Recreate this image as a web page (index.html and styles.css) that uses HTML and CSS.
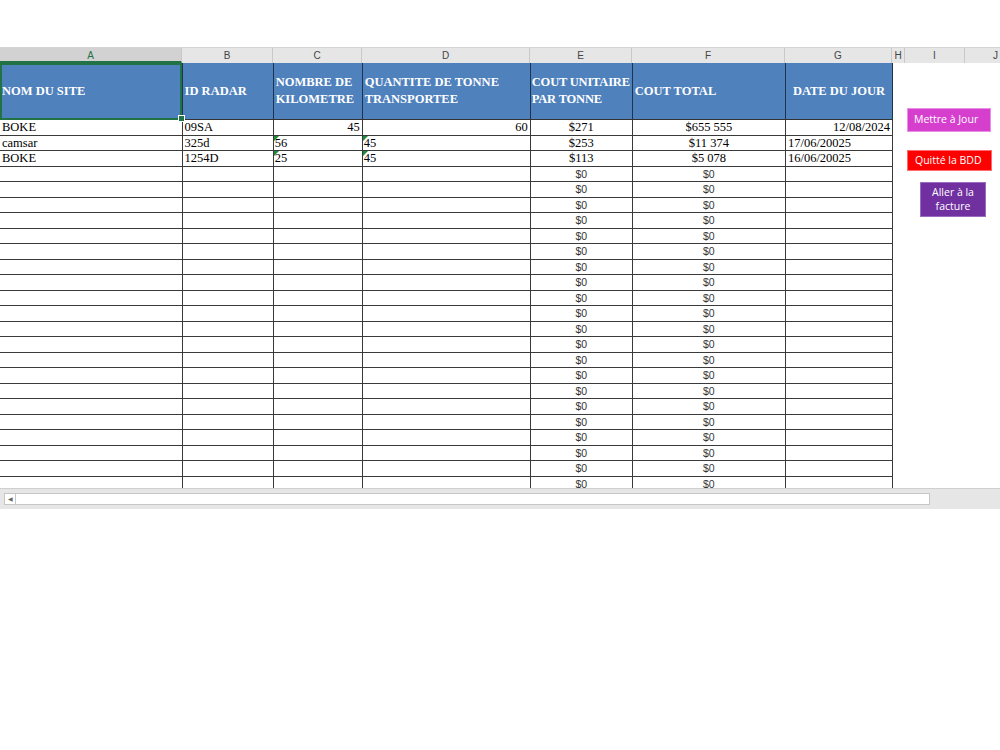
FILE: index.html
```html
<!DOCTYPE html>
<html lang="fr">
<head>
    <meta charset="UTF-8">
    <title>Base de données radar</title>
    <link rel="stylesheet" href="styles.css">
</head>
<body>
    <div class="sheet">
        <div class="col-heads">
            <div class="ch sel" style="width:182px">A</div>
            <div class="ch" style="width:91px">B</div>
            <div class="ch" style="width:89px">C</div>
            <div class="ch" style="width:168px">D</div>
            <div class="ch" style="width:102px">E</div>
            <div class="ch" style="width:153px">F</div>
            <div class="ch" style="width:107px">G</div>
            <div class="ch" style="width:13px">H</div>
            <div class="ch" style="width:60px">I</div>
            <div class="ch last">J</div>
        </div>

        <div class="grid">
            <table class="data">
                <colgroup>
                    <col style="width:182px"><col style="width:91px"><col style="width:89px">
                    <col style="width:168px"><col style="width:102px"><col style="width:153px">
                    <col style="width:107px">
                </colgroup>
                <thead>
                    <tr>
                        <th class="selected">NOM DU SITE<span class="handle"></span></th>
                        <th>ID RADAR</th>
                        <th>NOMBRE DE<br>KILOMETRE</th>
                        <th>QUANTITE DE TONNE<br>TRANSPORTEE</th>
                        <th class="tight">COUT UNITAIRE<br>PAR TONNE</th>
                        <th>COUT TOTAL</th>
                        <th class="center">DATE DU JOUR</th>
                    </tr>
                </thead>
                <tbody id="rows">
                    <tr>
                        <td>BOKE</td><td>09SA</td><td class="num">45</td><td class="num">60</td>
                        <td class="mid">$271</td><td class="mid">$655 555</td><td class="num">12/08/2024</td>
                    </tr>
                    <tr>
                        <td>camsar</td><td>325d</td><td class="txtnum">56</td><td class="txtnum">45</td>
                        <td class="mid">$253</td><td class="mid">$11 374</td><td>17/06/20025</td>
                    </tr>
                    <tr>
                        <td>BOKE</td><td>1254D</td><td class="txtnum">25</td><td class="txtnum">45</td>
                        <td class="mid">$113</td><td class="mid">$5 078</td><td>16/06/20025</td>
                    </tr>
                </tbody>
            </table>

            <div class="shape btn-maj">Mettre à Jour</div>
            <div class="shape btn-quit">Quitté la BDD</div>
            <div class="shape btn-fact">Aller à la<br>facture</div>
        </div>

        <div class="hscroll">
            <div class="arrow">&#9664;</div>
            <div class="track"></div>
        </div>
    </div>

    <script>
        // lignes vides avec les formules à $0
        var body = document.getElementById('rows');
        for (var i = 0; i < 21; i++) {
            var tr = document.createElement('tr');
            tr.innerHTML = '<td></td><td></td><td></td><td></td>' +
                '<td class="zero">$0</td><td class="zero">$0</td><td></td>';
            body.appendChild(tr);
        }
    </script>
</body>
</html>
```

FILE: styles.css
```css
body {
    margin: 0;
    background: #fff;
    font-family: 'Liberation Serif', serif;
    color: #000;
}
.sheet {
    margin-top: 47px;
    width: 1000px;
}
.col-heads {
    display: flex;
    height: 15px;
    background: #e6e6e6;
    border-top: 1px solid #d4d4d4;
    font-family: 'Liberation Sans', sans-serif;
    font-size: 10px;
    color: #444;
}
.ch {
    flex: none;
    box-sizing: border-box;
    border-right: 1px solid #c9c9c9;
    text-align: center;
    line-height: 15px;
}
.ch.sel {
    background: #d2d2d2;
    color: #217346;
    border-bottom: 2px solid #217346;
}
.ch.last {
    flex: 1;
    text-align: right;
    padding-right: 2px;
    border-right: none;
}
.grid {
    position: relative;
    height: 425px;
    overflow: hidden;
}
.data {
    table-layout: fixed;
    border-collapse: collapse;
    width: 893px;
}
.data th {
    height: 56px;
    padding: 0 2px;
    background: #4f81bd;
    color: #fff;
    font-size: 12.5px;
    line-height: 17px;
    font-weight: bold;
    text-align: left;
    white-space: nowrap;
    border-left: 1px solid #1f3350;
    border-right: 1px solid #1f3350;
    border-bottom: 1px solid #333;
    position: relative;
}
.data th.tight {
    padding: 0 1px;
    letter-spacing: -0.2px;
}
.data th.center {
    text-align: center;
}
.data th.selected {
    outline: 2px solid #217346;
    outline-offset: -2px;
    border-left: none;
}
.handle {
    position: absolute;
    right: -3px;
    bottom: -3px;
    width: 5px;
    height: 5px;
    background: #217346;
    border: 1px solid #fff;
    z-index: 2;
}
.data td {
    height: 14.5px;
    padding: 0 2px;
    font-size: 12.5px;
    line-height: 14px;
    border: 1px solid #3a3a3a;
    white-space: nowrap;
    overflow: hidden;
}
.data td:first-child {
    border-left: none;
}
.data td.num {
    text-align: right;
}
.data td.mid {
    text-align: center;
}
.data td.zero {
    text-align: center;
    font-family: 'Liberation Sans', sans-serif;
    font-size: 10.5px;
    color: #333;
}
.data td.txtnum {
    position: relative;
    padding-left: 1px;
}
.data td.txtnum::before {
    content: '';
    position: absolute;
    left: 0;
    top: 0;
    border-top: 5px solid #1e8a3c;
    border-right: 5px solid transparent;
}
.shape {
    position: absolute;
    box-sizing: border-box;
    font-family: 'Open Sans', 'Liberation Sans', sans-serif;
    font-size: 10.5px;
    color: #fff;
}
.btn-maj {
    left: 907px;
    top: 45px;
    width: 84px;
    height: 24px;
    padding: 3px 0 0 6px;
    background: #d63fce;
    border: 1px solid #e98fe4;
}
.btn-quit {
    left: 907px;
    top: 87px;
    width: 85px;
    height: 21px;
    padding: 2px 0 0 7px;
    background: #ff0000;
    border: 1px solid #ff6b6b;
}
.btn-fact {
    left: 920px;
    top: 119px;
    width: 66px;
    height: 35px;
    padding-top: 2px;
    text-align: center;
    line-height: 14px;
    background: #7030a0;
    border: 1px solid #9a6cc0;
}
.hscroll {
    display: flex;
    align-items: center;
    height: 20px;
    background: #e6e6e6;
    border-top: 1px solid #cfcfcf;
}
.arrow {
    box-sizing: border-box;
    width: 12px;
    height: 12px;
    margin-left: 4px;
    background: #fff;
    border: 1px solid #c6c6c6;
    font-size: 6px;
    line-height: 10px;
    text-align: center;
    color: #666;
}
.track {
    box-sizing: border-box;
    width: 914px;
    height: 12px;
    background: #fff;
    border: 1px solid #c6c6c6;
    border-left: none;
}
```
